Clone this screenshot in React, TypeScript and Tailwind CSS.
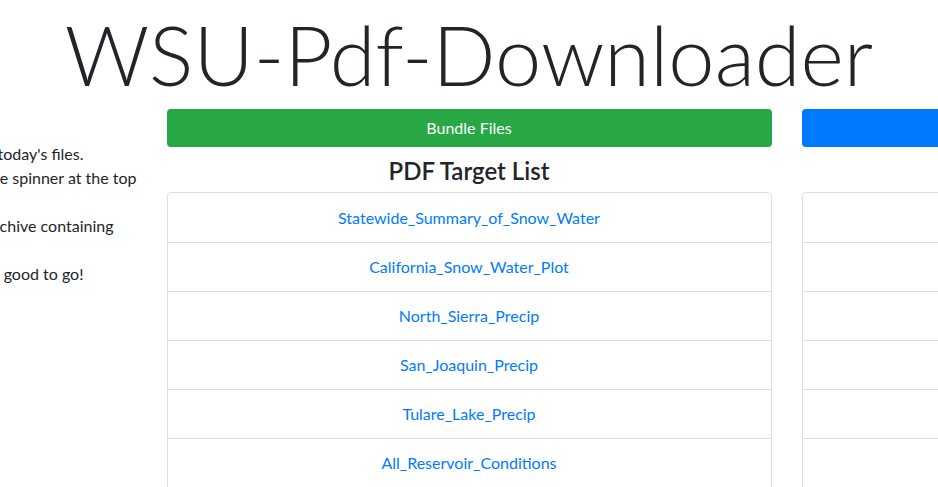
import React from 'react';

const targets = [
  'Statewide_Summary_of_Snow_Water',
  'California_Snow_Water_Plot',
  'North_Sierra_Precip',
  'San_Joaquin_Precip',
  'Tulare_Lake_Precip',
  'All_Reservoir_Conditions',
  'Northern_Reservoir_Conditions',
];

// left column lines, padded so their visible ends line up with the screenshot
const help: { text: string; pad: string }[] = [
  { text: "Click 'Bundle Files' to start collecting today's files.", pad: 'pr-[53px]' },
  { text: 'Wait for the download to finish. Keep an eye on the spinner at the top', pad: 'pr-0' },
  { text: 'of the page.', pad: 'pr-[400px]' },
  { text: 'When it is done your browser will save a zip archive containing', pad: 'pr-[23px]' },
  { text: 'every PDF.', pad: 'pr-[420px]' },
  { text: "Unzip the archive and you're good to go!", pad: 'pr-[53px]' },
];

const ListGroup: React.FC<{ items: string[] }> = ({ items }) => (
  <ul className="rounded border border-[#dfdfdf]">
    {items.map((item, i) => (
      <li
        key={i}
        className={`h-[49px] px-5 flex items-center justify-center ${i > 0 ? 'border-t border-[#dfdfdf]' : ''}`}
      >
        <a className="text-[#007bff] text-base leading-6">{item}</a>
      </li>
    ))}
  </ul>
);

export default function App() {
  return (
    <div
      className="h-[487px] w-[938px] overflow-hidden bg-white text-[#212529]"
      style={{ fontFamily: 'Lato, "Open Sans", sans-serif' }}
    >
      <h1 className="text-center text-[83px] font-light leading-[109px] h-[109px] whitespace-nowrap">
        WSU-Pdf-Downloader
      </h1>
      <div className="flex justify-center gap-[30px]">
        <div className="w-[605px] shrink-0 pt-[33px] text-base leading-6">
          {help.map((h, i) => (
            <div key={i} className={`text-right whitespace-nowrap ${h.pad}`}>
              {h.text}
            </div>
          ))}
        </div>
        <div className="w-[605px] shrink-0">
          <button className="w-full h-[38px] rounded bg-[#28a745] text-white text-base">Bundle Files</button>
          <h3 className="text-center text-2xl font-semibold leading-[29px] mt-[9px] mb-[7px]">PDF Target List</h3>
          <ListGroup items={targets} />
        </div>
        <div className="w-[605px] shrink-0">
          <button className="w-full h-[38px] rounded bg-[#007bff] text-white text-base">Download Zip</button>
          <h3 className="text-center text-2xl font-semibold leading-[29px] mt-[9px] mb-[7px]">Bundled</h3>
          <ListGroup items={['', '', '', '', '', '', '']} />
        </div>
      </div>
    </div>
  );
}
